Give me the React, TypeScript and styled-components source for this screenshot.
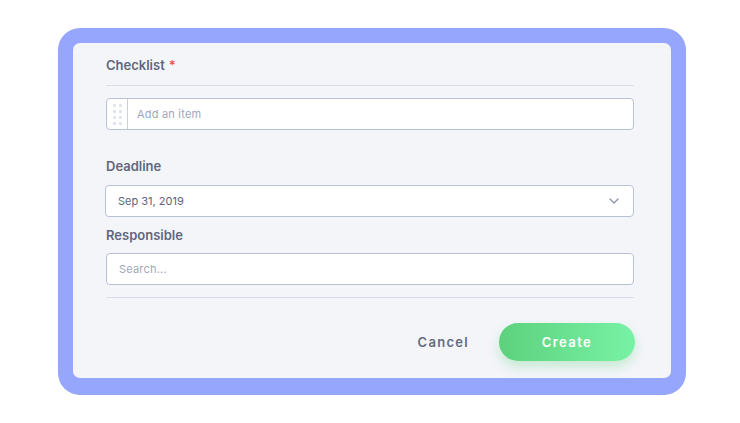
import React from 'react'
import styled, { createGlobalStyle } from 'styled-components'

const GlobalStyle = createGlobalStyle`
    html, body {
        margin: 0;
        padding: 0;
        background: #ffffff;
        font-family: Inter, "Noto Sans", sans-serif;
    }
`

const Page = styled.div`
    width: 740px;
    height: 423px;
    padding: 28px 0 0 58px;
    box-sizing: border-box;
`

const Frame = styled.div`
    width: 628px;
    height: 367px;
    box-sizing: border-box;
    padding: 15px 15px 17px 15px;
    background: #96a6fd;
    border-radius: 22px;
`

const Panel = styled.div`
    height: 100%;
    box-sizing: border-box;
    padding: 14px 37px 0 33px;
    background: #f4f5f9;
    border-radius: 7px;
    display: flex;
    flex-direction: column;
`

const Label = styled.div<{ $top?: number }>`
    margin-top: ${p => p.$top ?? 0}px;
    font-size: 13px;
    line-height: 16px;
    font-weight: 600;
    color: #5f6780;

    span {
        color: #f0524f;
        margin-left: 4px;
    }
`

const Divider = styled.div<{ $top: number }>`
    margin-top: ${p => p.$top}px;
    height: 1px;
    background: #dadee8;
`

const Field = styled.div<{ $top: number; $wide?: boolean }>`
    margin-top: ${p => p.$top}px;
    margin-left: ${p => (p.$wide ? -1 : 0)}px;
    height: 32px;
    box-sizing: border-box;
    border: 1px solid #b9c1d5;
    border-radius: 4px;
    background: #ffffff;
    display: flex;
    align-items: center;
    font-size: 11px;
`

const Handle = styled.div`
    width: 20px;
    height: 100%;
    border-right: 1px solid #c9cfdd;
    display: grid;
    grid-template-columns: 3px 3px;
    grid-template-rows: repeat(4, 3px);
    column-gap: 3px;
    row-gap: 3px;
    align-content: center;
    justify-content: center;

    i {
        width: 3px;
        height: 3px;
        background: #e0e3ec;
        border-radius: 1px;
    }
`

const Text = styled.div<{ $muted?: boolean; $left: number }>`
    flex: 1;
    padding-left: ${p => p.$left}px;
    color: ${p => (p.$muted ? '#a0a8bb' : '#5d6478')};
    letter-spacing: ${p => (p.$muted ? 0.2 : 0)}px;
`

const Chevron = styled.svg`
    margin-right: 14px;
`

const Actions = styled.div`
    margin-top: 25px;
    display: flex;
    justify-content: flex-end;
    align-items: center;
`

const CancelButton = styled.button`
    border: none;
    background: none;
    padding: 0;
    font-family: inherit;
    font-size: 13px;
    font-weight: 600;
    letter-spacing: 1.3px;
    color: #636b80;
    margin-right: 30px;
    cursor: pointer;
`

const CreateButton = styled.button`
    width: 136px;
    height: 38px;
    margin-right: -1px;
    border: none;
    border-radius: 19px;
    background: linear-gradient(90deg, #5dd17d 0%, #78f2a5 100%);
    box-shadow: 0 6px 12px rgba(94, 209, 125, 0.3);
    color: #ffffff;
    font-family: inherit;
    font-size: 13px;
    font-weight: 600;
    letter-spacing: 1.4px;
    cursor: pointer;
`

function App() {
    return (
        <Page>
            <GlobalStyle />
            <Frame>
                <Panel>
                    <Label>Checklist<span>*</span></Label>
                    <Divider $top={12} />
                    <Field $top={12}>
                        <Handle>
                            {Array.from({ length: 8 }).map((_, i) => <i key={i} />)}
                        </Handle>
                        <Text $muted $left={9}>Add an item</Text>
                    </Field>
                    <Label $top={28}>Deadline</Label>
                    <Field $top={11} $wide>
                        <Text $left={12}>Sep 31, 2019</Text>
                        <Chevron width="10" height="6" viewBox="0 0 10 6">
                            <path d="M1 1l4 4 4-4" fill="none" stroke="#8a93a8" strokeWidth="1.3" strokeLinecap="round" strokeLinejoin="round" />
                        </Chevron>
                    </Field>
                    <Label $top={10}>Responsible</Label>
                    <Field $top={10}>
                        <Text $muted $left={12}>Search...</Text>
                    </Field>
                    <Divider $top={12} />
                    <Actions>
                        <CancelButton>Cancel</CancelButton>
                        <CreateButton>Create</CreateButton>
                    </Actions>
                </Panel>
            </Frame>
        </Page>
    )
}

export default App
